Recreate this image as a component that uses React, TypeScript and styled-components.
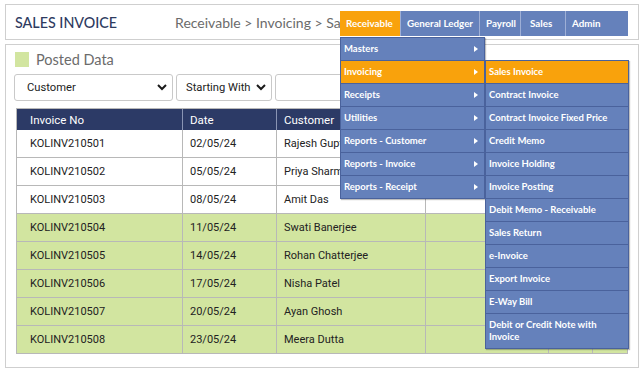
import React from "react";
import styled, { createGlobalStyle } from "styled-components";

const GlobalStyle = createGlobalStyle`
  html, body { margin: 0; padding: 0; background: #ffffff; }
  body { font-family: Roboto, "Liberation Sans", sans-serif; }
  * { box-sizing: border-box; }
`;

const MENU_BLUE = "#6581bb";
const MENU_LINE = "#4a629c";
const ORANGE = "#f9a20c";
const NAVY = "#2c3a66";
const GREEN = "#d2e5a0";
const GRID = "#b8b8b8";

const Page = styled.div`
  width: 644px;
  padding: 4px 5px 0 5px;
`;

const HeaderBox = styled.header`
  height: 36px;
  border: 1px solid #cfcfcf;
  display: flex;
  align-items: center;
  padding: 0 10px 0 9px;
`;

const Title = styled.h1`
  margin: 0 58px 0 0;
  font-family: Lato, "Open Sans", sans-serif;
  font-size: 14.3px;
  font-weight: 500;
  color: #2e3b5f;
  white-space: nowrap;
  flex: none;
`;

const Breadcrumb = styled.div`
  flex: 1;
  min-width: 0;
  overflow: hidden;
  white-space: nowrap;
  text-overflow: clip;
  font-family: Lato, "Open Sans", sans-serif;
  font-size: 14px;
  color: #6b6b6b;
`;

const Nav = styled.nav`
  flex: none;
  display: flex;
  width: 288px;
  height: 25px;
  margin-top: 2px;
  background: ${MENU_BLUE};
  position: relative;
  z-index: 10;
`;

const NavItem = styled.div<{ $w?: number; $active?: boolean; $pl?: number }>`
  position: relative;
  ${(p) => (p.$w ? `width: ${p.$w}px; flex: none;` : "flex: 1;")}
  height: 25px;
  display: flex;
  align-items: center;
  padding-left: ${(p) => p.$pl ?? 6}px;
  background: ${(p) => (p.$active ? ORANGE : MENU_BLUE)};
  border-left: ${(p) => (p.$active ? "none" : "1px solid #9eafd6")};
  color: #ffffff;
  font-family: Lato, "Open Sans", sans-serif;
  font-size: 9.8px;
  font-weight: 700;
  white-space: nowrap;
`;

const Dropdown = styled.div<{ $w: number; $top: number; $left: string }>`
  position: absolute;
  top: ${(p) => p.$top}px;
  left: ${(p) => p.$left};
  width: ${(p) => p.$w}px;
  background: ${MENU_BLUE};
  border: 1px solid ${MENU_LINE};
  border-bottom: none;
  box-shadow: 1px 1px 1px rgba(0, 0, 0, 0.25);
  white-space: normal;
`;

const MenuItem = styled.div<{ $active?: boolean; $tall?: boolean; $sub?: boolean }>`
  position: relative;
  min-height: 23px;
  display: flex;
  align-items: center;
  justify-content: space-between;
  padding: ${(p) => (p.$tall ? "5px 20px 5px 3px" : p.$sub ? "0 20px 0 3px" : "0 6px 0 3px")};
  border-bottom: 1px solid ${MENU_LINE};
  background: ${(p) => (p.$active ? ORANGE : MENU_BLUE)};
  color: #ffffff;
  font-family: Lato, "Open Sans", sans-serif;
  font-size: 9.5px;
  font-weight: 700;
  line-height: 12px;
  white-space: normal;
`;

const Arrow = styled.span`
  width: 0;
  height: 0;
  border-left: 4px solid #ffffff;
  border-top: 3px solid transparent;
  border-bottom: 3px solid transparent;
`;

const Panel = styled.section`
  margin-top: 4px;
  height: 324px;
  border: 1px solid #cfcfcf;
  padding: 7px 10px 0 8px;
`;

const Legend = styled.div`
  display: flex;
  align-items: center;
  gap: 7px;
  margin-left: 1px;
  height: 15px;
  font-family: Lato, "Open Sans", sans-serif;
  font-size: 14.5px;
  color: #6b6b6b;
`;

const Swatch = styled.span`
  width: 14px;
  height: 15px;
  background: ${GREEN};
`;

const Filters = styled.div`
  margin-top: 7px;
  display: flex;
  gap: 3px;
`;

const SelectBox = styled.div<{ $w?: number; $pl?: number }>`
  ${(p) => (p.$w ? `width: ${p.$w}px; flex: none;` : "flex: 1;")}
  height: 27px;
  border: 1px solid #c9c9c9;
  border-radius: 3px;
  display: flex;
  align-items: center;
  justify-content: space-between;
  padding: 0 5px 0 ${(p) => p.$pl ?? 11}px;
  font-size: 11.2px;
  color: #222;
  background: #fff;
  white-space: nowrap;
`;

const SearchButton = styled.div`
  width: 60px;
  height: 27px;
  border-radius: 3px;
  background: ${NAVY};
  color: #fff;
  font-size: 11px;
  display: flex;
  align-items: center;
  justify-content: center;
`;

const Table = styled.div`
  margin: 7px 0 0 2px;
  width: 612px;
  border: 1px solid ${GRID};
  border-bottom: none;
`;

const COLS = "166px 94px 149px 123px 44px 1fr";

const HeadRow = styled.div`
  display: grid;
  grid-template-columns: ${COLS};
  height: 21px;
  background: ${NAVY};
`;

const HeadCell = styled.div<{ $first?: boolean }>`
  display: flex;
  align-items: center;
  padding-left: ${(p) => (p.$first ? 13 : 7)}px;
  border-right: 1px solid #8a94b3;
  color: #ffffff;
  font-size: 11.5px;
  &:last-child { border-right: none; }
`;

const Row = styled.div<{ $posted?: boolean }>`
  display: grid;
  grid-template-columns: ${COLS};
  height: 28px;
  border-bottom: 1px solid ${GRID};
  background: ${(p) => (p.$posted ? GREEN : "#ffffff")};
`;

const Cell = styled.div<{ $first?: boolean }>`
  display: flex;
  align-items: center;
  padding-left: ${(p) => (p.$first ? 13 : 7)}px;
  border-right: 1px solid ${GRID};
  color: #222;
  font-size: 11px;
  white-space: nowrap;
  overflow: hidden;
  &:last-child { border-right: none; }
`;

const Chevron = () => (
  <svg width="10" height="7" viewBox="0 0 10 7">
    <polyline points="1,1 5,5 9,1" fill="none" stroke="#1a1a1a" strokeWidth="2" />
  </svg>
);

const mainMenu = [
  "Masters",
  "Invoicing",
  "Receipts",
  "Utilities",
  "Reports - Customer",
  "Reports - Invoice",
  "Reports - Receipt",
];

const subMenu = [
  "Sales Invoice",
  "Contract Invoice",
  "Contract Invoice Fixed Price",
  "Credit Memo",
  "Invoice Holding",
  "Invoice Posting",
  "Debit Memo - Receivable",
  "Sales Return",
  "e-Invoice",
  "Export Invoice",
  "E-Way Bill",
  "Debit or Credit Note with Invoice",
];

const rows = [
  ["KOLINV210501", "02/05/24", "Rajesh Gupta", false],
  ["KOLINV210502", "05/05/24", "Priya Sharma", false],
  ["KOLINV210503", "08/05/24", "Amit Das", false],
  ["KOLINV210504", "11/05/24", "Swati Banerjee", true],
  ["KOLINV210505", "14/05/24", "Rohan Chatterjee", true],
  ["KOLINV210506", "17/05/24", "Nisha Patel", true],
  ["KOLINV210507", "20/05/24", "Ayan Ghosh", true],
  ["KOLINV210508", "23/05/24", "Meera Dutta", true],
] as const;

export default function App() {
  return (
    <>
      <GlobalStyle />
      <Page>
        <HeaderBox>
          <Title>SALES INVOICE</Title>
          <Breadcrumb>Receivable &gt; Invoicing &gt; Sales Invoice</Breadcrumb>
          <Nav>
            <NavItem $w={60} $active>
              Receivable
              <Dropdown $w={145} $top={26} $left="0">
                {mainMenu.map((m) => (
                  <MenuItem key={m} $active={m === "Invoicing"}>
                    {m}
                    <Arrow />
                    {m === "Invoicing" && (
                      <Dropdown $w={144} $top={-1} $left="144px">
                        {subMenu.map((s, i) => (
                          <MenuItem
                            key={s}
                            $sub
                            $active={i === 0}
                            $tall={i === subMenu.length - 1}
                          >
                            {s}
                          </MenuItem>
                        ))}
                      </Dropdown>
                    )}
                  </MenuItem>
                ))}
              </Dropdown>
            </NavItem>
            <NavItem $w={79}>General Ledger</NavItem>
            <NavItem $w={41}>Payroll</NavItem>
            <NavItem $w={45} $pl={9}>Sales</NavItem>
            <NavItem>Admin</NavItem>
          </Nav>
        </HeaderBox>
        <Panel>
          <Legend>
            <Swatch />
            Posted Data
          </Legend>
          <Filters>
            <SelectBox $w={159} $pl={12}>
              Customer
              <Chevron />
            </SelectBox>
            <SelectBox $w={96} $pl={9}>
              Starting With
              <Chevron />
            </SelectBox>
            <SelectBox />
            <SearchButton>Search</SearchButton>
          </Filters>
          <Table>
            <HeadRow>
              <HeadCell $first>Invoice No</HeadCell>
              <HeadCell>Date</HeadCell>
              <HeadCell>Customer</HeadCell>
              <HeadCell>Amount</HeadCell>
              <HeadCell />
              <HeadCell />
            </HeadRow>
            {rows.map(([no, date, cust, posted]) => (
              <Row key={no} $posted={posted}>
                <Cell $first>{no}</Cell>
                <Cell>{date}</Cell>
                <Cell>{cust}</Cell>
                <Cell />
                <Cell />
                <Cell />
              </Row>
            ))}
          </Table>
        </Panel>
      </Page>
    </>
  );
}
